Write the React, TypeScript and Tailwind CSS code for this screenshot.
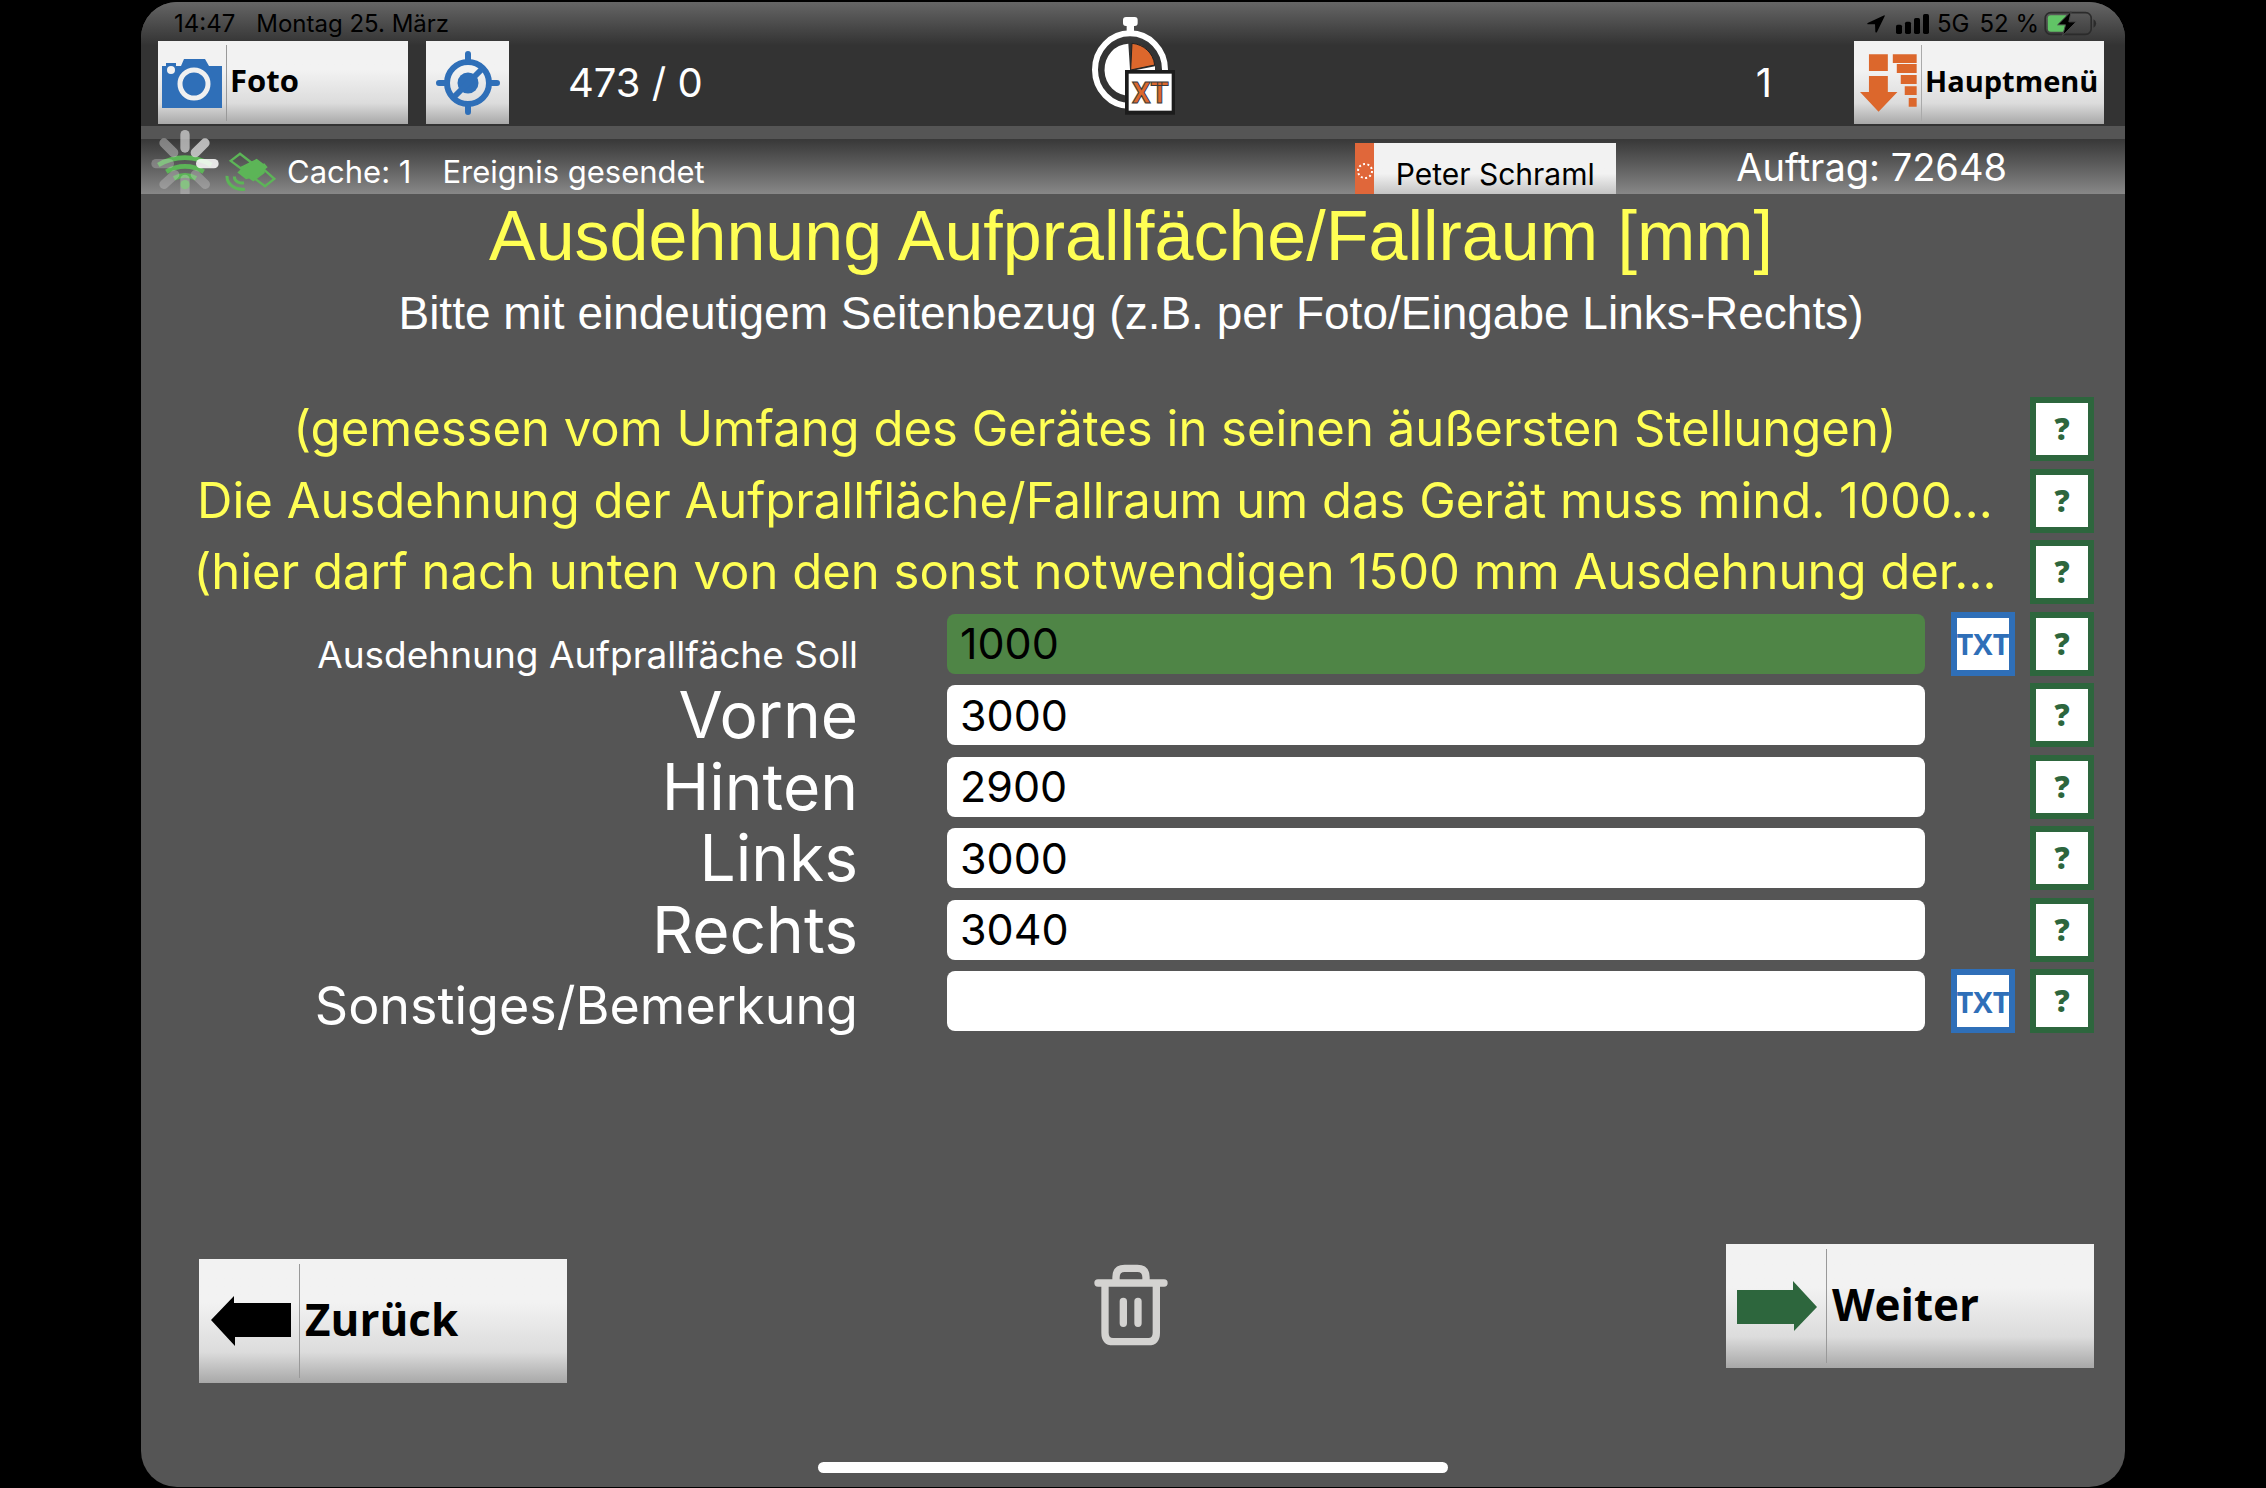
import React from 'react';

const BUTTON_BG = 'bg-linear-to-b from-[#f2f2f2] from-35% via-[#dcdcdc] via-75% to-[#a8a8a8]';

const CameraIcon: React.FC<{ className?: string }> = ({ className }) => (
  <svg className={className} viewBox="0 0 60 50" fill="#2f6fb8" aria-hidden="true">
    <path d="M0 8h4V5h10v3h5l3-7h21l4 7h13v42H0z" />
    <circle cx="32" cy="26" r="14" fill="none" stroke="#f0f0f0" strokeWidth="5" />
    <circle cx="9" cy="12" r="4" fill="#f2f2f2" />
  </svg>
);

const CrosshairIcon: React.FC<{ className?: string }> = ({ className }) => (
  <svg className={className} viewBox="0 0 66 66" fill="none" stroke="#2f6fb8" aria-hidden="true">
    <circle cx="33" cy="33" r="21" strokeWidth="6" />
    <circle cx="33" cy="33" r="10.5" fill="#2f6fb8" stroke="none" />
    <path d="M33 4v8M33 54v8M4 33h8M54 33h8" strokeWidth="6" strokeLinecap="round" />
    <path d="M19 47l28-28" strokeWidth="6" />
  </svg>
);

const MenuIcon: React.FC<{ className?: string }> = ({ className }) => (
  <svg className={className} viewBox="0 0 172 174" fill="#dc672c" aria-hidden="true">
    <path d="M27 0h57v51H27zM27 66h57v48h29l-57 60-56-60h27z" />
    <path d="M99 0h72v27H99zM111 30h60v27h-60zM123 63h48v27h-48zM135 97h36v26h-36zM147 132h24v27h-24z" />
  </svg>
);

const Logo: React.FC<{ className?: string }> = ({ className }) => (
  <svg className={className} viewBox="153 45 252 300" aria-label="XT">
    <rect x="249" y="48" width="44" height="27" rx="9" fill="#fff" />
    <rect x="260" y="66" width="22" height="30" fill="#fff" />
    <ellipse cx="270" cy="206" rx="105" ry="109" fill="none" stroke="#fff" strokeWidth="18" />
    <path d="M265 128A74 78 0 0 0 270 284V205z" fill="#fff" />
    <path d="M276 127C310 130 340 155 344 192L272 207z" fill="#dc672c" stroke="#222" strokeWidth="3" />
    <path d="M285 208l60-12v12z" fill="#fff" />
    <rect x="255" y="207" width="150" height="134" fill="#1c1c1c" />
    <rect x="266" y="218" width="129" height="111" fill="#fff" />
    <text
      x="331"
      y="305"
      textAnchor="middle"
      fontSize="88"
      fill="#dc672c"
      stroke="#3a3a3a"
      strokeWidth="3"
      className="font-['Liberation_Sans_Narrow',Roboto,sans-serif] font-bold"
    >
      XT
    </text>
  </svg>
);

const LocationIcon: React.FC<{ className?: string }> = ({ className }) => (
  <svg className={className} viewBox="0 0 54 54" aria-hidden="true">
    <path d="M52 1L2 24q-3 3 2 4h20l1 22q2 5 5 1L53 4q1-4-1-3z" />
  </svg>
);

const SignalIcon: React.FC<{ className?: string }> = ({ className }) => (
  <svg className={className} viewBox="0 0 99 60" aria-hidden="true">
    <rect x="0" y="32" width="18" height="28" rx="5" />
    <rect x="27" y="23" width="18" height="37" rx="5" />
    <rect x="54" y="12" width="18" height="48" rx="5" />
    <rect x="81" y="0" width="18" height="60" rx="5" />
  </svg>
);

const BatteryIcon: React.FC<{ className?: string }> = ({ className }) => (
  <svg className={className} viewBox="0 0 160 76" aria-hidden="true">
    <rect x="3" y="5" width="140" height="66" rx="17" fill="none" stroke="#2b2b2b" strokeWidth="5" />
    <path d="M150 25q8 4 8 13t-8 13z" fill="#2b2b2b" />
    <path d="M20 13h46v50H20q-9 0-9-9V22q0-9 9-9z" fill="#61c466" />
    <path d="M82 1L41 42h24L56 75l41-42H75z" fill="#000" stroke="#4a4a4a" strokeWidth="3" />
  </svg>
);

const NetworkIcon: React.FC<{ className?: string }> = ({ className }) => (
  <svg className={className} viewBox="33 30 204 192" fill="none" aria-hidden="true">
    <g stroke="#5cb557" strokeWidth="14">
      <path d="M55 135A155 155 0 0 1 214 135" />
      <path d="M79 155A108 108 0 0 1 191 155" />
      <path d="M102 175A70 70 0 0 1 168 175" />
    </g>
    <circle cx="135" cy="194" r="14" fill="#5cb557" />
    <g stroke="#d8d8d8" strokeWidth="28" strokeLinecap="round">
      <path d="M135 44v40" opacity=".7" />
      <path d="M195 69l-29 29" opacity=".8" />
      <path d="M182 131h40" stroke="#fff" opacity=".85" />
      <path d="M166 164l30 29" opacity=".32" />
      <path d="M135 178v50" opacity=".35" />
      <path d="M104 164l-32 29" opacity=".32" />
      <path d="M48 131h40" opacity=".32" />
      <path d="M72 69l29 29" opacity=".45" />
    </g>
  </svg>
);

const SatelliteIcon: React.FC<{ className?: string }> = ({ className }) => (
  <svg className={className} viewBox="255 97 153 116" fill="none" stroke="#5cb557" aria-hidden="true">
    <path d="M350 117l20 15 3-2 10 12-13 11 5 6-35 26-13-9-9 2-26-20 12-11-2-6z" fill="#5cb557" stroke="none" />
    <path d="M272 123l28-21 34 26-27 21z" strokeWidth="7" />
    <path d="M343 175l31-24 29 26-28 22z" strokeWidth="7" />
    <path d="M261 168c-1 26 25 44 54 40M283 170c0 14 14 22 29 19" strokeWidth="9" />
  </svg>
);

const StarsIcon: React.FC<{ className?: string }> = ({ className }) => (
  <svg className={className} viewBox="0 0 16 16" fill="none" stroke="#fff" aria-hidden="true">
    <circle cx="8" cy="8" r="7" strokeWidth="2" strokeDasharray="2 2.4" />
  </svg>
);

const TrashIcon: React.FC<{ className?: string }> = ({ className }) => (
  <svg className={className} viewBox="0 0 222 246" fill="none" stroke="#d4d3d1" strokeWidth="22" strokeLinecap="round" aria-hidden="true">
    <path d="M12 57h198" />
    <path d="M33 60v146q0 27 24 27h106q24 0 24-27V60" />
    <path d="M66 55V40q0-27 26-27h38q26 0 26 27v15" />
    <path d="M88 112v66M132 112v66" />
  </svg>
);

const ArrowIcon: React.FC<{ className?: string }> = ({ className }) => (
  <svg className={className} viewBox="0 0 80 50" fill="currentColor" aria-hidden="true">
    <path d="M0 9h56V0l24 26-23 24v-7H0z" />
  </svg>
);

const HelpButton: React.FC = () => (
  <button
    type="button"
    aria-label="Hilfe"
    className="size-16 shrink-0 border-6 border-[#2d663d] bg-white font-['Open_Sans',sans-serif] text-[30px] leading-none font-extrabold text-[#2d663d]"
  >
    ?
  </button>
);

const TextButton: React.FC = () => (
  <button
    type="button"
    className="flex size-16 shrink-0 items-center justify-center border-6 border-[#2f6fb8] bg-white font-['Open_Sans',sans-serif] text-[29px] leading-none font-bold text-[#2f6fb8]"
  >
    TXT
  </button>
);

const hints = [
  '(gemessen vom Umfang des Gerätes in seinen äußersten Stellungen)',
  'Die Ausdehnung der Aufprallfläche/Fallraum um das Gerät muss mind. 1000…',
  '(hier darf nach unten von den sonst notwendigen 1500 mm Ausdehnung der…',
];

const fields = [
  { id: 'soll', label: 'Ausdehnung Aufprallfäche Soll', value: '1000', labelClass: 'text-[37px] pt-[22px]', inputClass: 'bg-[#4f8546]', txt: true },
  { id: 'vorne', label: 'Vorne', value: '3000', labelClass: 'text-[64px]', inputClass: 'bg-white', txt: false },
  { id: 'hinten', label: 'Hinten', value: '2900', labelClass: 'text-[64px]', inputClass: 'bg-white', txt: false },
  { id: 'links', label: 'Links', value: '3000', labelClass: 'text-[64px]', inputClass: 'bg-white', txt: false },
  { id: 'rechts', label: 'Rechts', value: '3040', labelClass: 'text-[64px]', inputClass: 'bg-white', txt: false },
  { id: 'bemerkung', label: 'Sonstiges/Bemerkung', value: '', labelClass: 'text-[52px] pt-[10px]', inputClass: 'bg-white', txt: true },
];

const Header: React.FC = () => (
  <header className="grid h-[124px] grid-cols-[1fr_84px_1fr] bg-linear-to-b from-[#666] to-[#333] to-35%">
    <div className="flex flex-col">
      <div className="flex h-[39px] items-center gap-[21px] pt-1 pl-[33px] text-[24px]">
        <span>14:47</span>
        <span>Montag 25. März</span>
      </div>
      <div className="flex items-center pl-[17px]">
        <button type="button" className={`flex h-[83px] w-[250px] items-center pl-1 font-['Open_Sans',sans-serif] text-[31px] font-bold ${BUTTON_BG}`}>
          <CameraIcon className="h-[50px] w-[60px]" />
          <span className="ml-1 h-[76px] w-px bg-[#999]" />
          <span className="ml-[3px] pb-1">Foto</span>
        </button>
        <button type="button" aria-label="Position" className={`ml-[18px] flex size-[83px] items-center justify-center ${BUTTON_BG}`}>
          <CrosshairIcon className="size-[66px]" />
        </button>
        <span className="ml-[59px] text-[40px] text-white">473 / 0</span>
      </div>
    </div>
    <Logo className="mt-[14px] h-[100px] w-[84px]" />
    <div className="flex flex-col">
      <div className="flex h-[39px] items-center justify-end pt-1 pr-[28px] text-[24px]">
        <LocationIcon className="size-[18px]" />
        <SignalIcon className="mr-2 ml-[11px] h-5 w-[33px]" />
        <span className="mr-[10px]">5G</span>
        <span className="mr-[5px]">52 %</span>
        <BatteryIcon className="h-[25px] w-[53px]" />
      </div>
      <div className="flex items-center justify-end pr-[21px]">
        <span className="mr-[82px] text-[40px] text-white">1</span>
        <button type="button" className={`flex h-[83px] w-[250px] items-center pl-[6px] font-['Open_Sans',sans-serif] text-[29px] font-bold ${BUTTON_BG}`}>
          <MenuIcon className="h-[58px] w-[57px]" />
          <span className="ml-1 h-[76px] w-px bg-[#aaa]" />
          <span className="ml-[3px] pb-1">Hauptmenü</span>
        </button>
      </div>
    </div>
  </header>
);

const StatusBar: React.FC = () => (
  <div className="mt-[13px] flex h-[55px] items-end bg-linear-to-b from-[#383838] to-[#888] pl-[10px] text-white">
    <NetworkIcon className="h-16 w-[68px] shrink-0" />
    <SatelliteIcon className="mb-[3px] ml-[6px] h-[39px] w-[51px] shrink-0" />
    <span className="ml-[11px] text-[31px] leading-[44px]">Cache: 1</span>
    <span className="ml-[31px] text-[31px] leading-[44px]">Ereignis gesendet</span>
    <div className="ml-auto flex h-[51px] w-[261px] bg-linear-to-b from-[#f2f2f2] from-60% to-[#c4c4c4] text-black">
      <span className="flex w-[19px] items-center justify-center bg-[#e0673a]">
        <StarsIcon className="mt-1 size-4" />
      </span>
      <span className="flex-1 pt-[9px] text-center text-[30px] leading-[44px]">Peter Schraml</span>
    </div>
    <span className="mr-[118px] ml-[120px] text-[38px] leading-[54px]">Auftrag: 72648</span>
  </div>
);

const App: React.FC = () => {
  return (
    <div className="flex min-h-screen flex-col bg-black px-[141px] pt-0.5 pb-px font-[Inter,'Liberation_Sans',sans-serif]">
      <div className="flex flex-1 flex-col overflow-hidden rounded-[36px] bg-[#555]">
        <Header />
        <StatusBar />

        <main className="flex flex-1 flex-col">
          <div className="pr-1 text-center font-['Liberation_Sans',Arial,sans-serif]">
            <h1 className="text-[70px] leading-[84px] text-[#ffff54]">Ausdehnung Aufprallfäche/Fallraum [mm]</h1>
            <p className="text-[46px] leading-[70px] text-white">Bitte mit eindeutigem Seitenbezug (z.B. per Foto/Eingabe Links-Rechts)</p>
          </div>

          <form className="mt-[49px] flex h-[636px] flex-col justify-between pr-[31px] pl-[50px]">
            {hints.map((hint) => (
              <div key={hint} className="flex h-16 items-center">
                <p className="min-w-0 flex-1 overflow-hidden text-center text-[49px] leading-[60px] text-ellipsis whitespace-nowrap text-[#ffff54]">{hint}</p>
                <div className="ml-[31px] shrink-0">
                  <HelpButton />
                </div>
              </div>
            ))}
            {fields.map((field) => (
              <div key={field.id} className="flex h-16 items-center">
                <label htmlFor={field.id} className={`mr-[89px] w-[667px] text-right leading-[64px] whitespace-nowrap text-white ${field.labelClass}`}>
                  {field.label}
                </label>
                <input
                  id={field.id}
                  type="text"
                  defaultValue={field.value}
                  className={`h-[60px] min-w-0 flex-1 rounded-lg px-[13px] text-[43px] text-black ${field.inputClass}`}
                />
                <div className="ml-[26px] flex w-[143px] justify-end gap-[15px]">
                  {field.txt && <TextButton />}
                  <HelpButton />
                </div>
              </div>
            ))}
          </form>

          <div className="mt-auto flex items-start justify-between pr-[31px] pl-[58px]">
            <button type="button" className={`mt-[15px] flex h-[124px] w-[368px] items-center pl-[12px] font-['Open_Sans',sans-serif] text-[44px] font-bold ${BUTTON_BG}`}>
              <ArrowIcon className="h-[50px] w-20 rotate-180" />
              <span className="ml-[8px] h-[114px] w-px bg-[#999]" />
              <span className="ml-[5px] pb-1">Zurück</span>
            </button>
            <button type="button" aria-label="Löschen" className="mt-[20px] mr-8">
              <TrashIcon className="h-[82px] w-[74px]" />
            </button>
            <button type="button" className={`flex h-[124px] w-[368px] items-center pl-[11px] font-['Open_Sans',sans-serif] text-[44px] font-bold ${BUTTON_BG}`}>
              <ArrowIcon className="h-[50px] w-20 text-[#2d663d]" />
              <span className="ml-[9px] h-[114px] w-px bg-[#999]" />
              <span className="ml-[5px] pb-1">Weiter</span>
            </button>
          </div>
          <div className="mx-auto mt-[79px] mb-[14px] h-[11px] w-[630px] rounded-full bg-white" />
        </main>
      </div>
    </div>
  );
};

export default App;
